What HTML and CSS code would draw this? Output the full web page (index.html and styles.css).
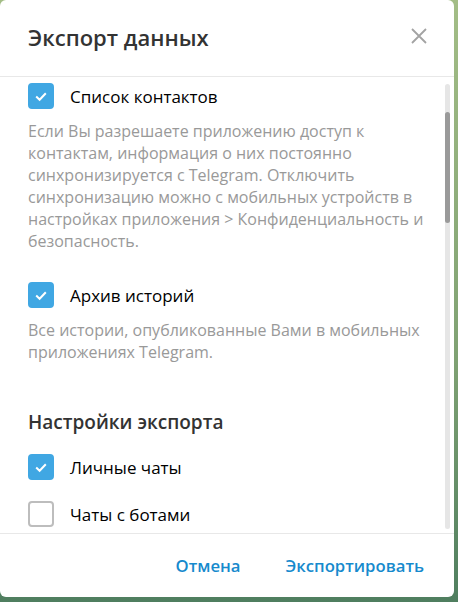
FILE: index.html
```html
<!DOCTYPE html>
<html lang="ru">
<head>
  <meta charset="UTF-8">
  <meta name="viewport" content="width=device-width, initial-scale=1.0">
  <title>Экспорт данных</title>
  <link rel="stylesheet" href="styles.css">
</head>
<body>
  <div class="box">
    <div class="box-header">
      <h1>Экспорт данных</h1>
      <button class="close" aria-label="Закрыть">
        <svg width="16" height="16" viewBox="0 0 16 16">
          <path d="M1 1L15 15M15 1L1 15" stroke="#a3a3a3" stroke-width="1.8" fill="none"/>
        </svg>
      </button>
    </div>

    <div class="box-body">
      <div class="scroll-content">
        <label class="check-row">
          <span class="checkbox checked">
            <svg width="26" height="26" viewBox="0 0 26 26">
              <path d="M8.2 13.6L11.6 16.8L17.8 10.2" stroke="#fff" stroke-width="2" fill="none"/>
            </svg>
          </span>
          Список контактов
        </label>
        <p class="about">Если Вы разрешаете приложению доступ к контактам, информация о них постоянно синхронизируется с Telegram. Отключить синхронизацию можно с мобильных устройств в настройках приложения &gt; Конфиденциальность и безопасность.</p>

        <label class="check-row">
          <span class="checkbox checked">
            <svg width="26" height="26" viewBox="0 0 26 26">
              <path d="M8.2 13.6L11.6 16.8L17.8 10.2" stroke="#fff" stroke-width="2" fill="none"/>
            </svg>
          </span>
          Архив историй
        </label>
        <p class="about">Все истории, опубликованные Вами в мобильных приложениях Telegram.</p>

        <h2>Настройки экспорта</h2>

        <label class="check-row">
          <span class="checkbox checked">
            <svg width="26" height="26" viewBox="0 0 26 26">
              <path d="M8.2 13.6L11.6 16.8L17.8 10.2" stroke="#fff" stroke-width="2" fill="none"/>
            </svg>
          </span>
          Личные чаты
        </label>
        <label class="check-row">
          <span class="checkbox"></span>
          Чаты с ботами
        </label>
      </div>
      <div class="scrollbar"><div class="scrollbar-thumb"></div></div>
    </div>

    <div class="box-footer">
      <button class="link-btn">Отмена</button>
      <button class="link-btn">Экспортировать</button>
    </div>
  </div>
</body>
</html>
```

FILE: styles.css
```css
body {
  margin: 0;
  height: 602px;
  overflow: hidden;
  font-family: "Open Sans", sans-serif;
  background: linear-gradient(180deg, #a3bd86 0%, #7fa173 60%, #4f7e5f 100%);
}

.box {
  width: 454px;
  height: 597px;
  background-color: #fff;
  border-radius: 6px;
  display: flex;
  flex-direction: column;
  overflow: hidden;
}

.box-header {
  height: 76px;
  flex-shrink: 0;
  display: flex;
  align-items: center;
  justify-content: space-between;
  padding: 0 28px;
  border-bottom: 1px solid #e8e8e8;
}

h1 {
  margin: 0;
  font-size: 22px;
  font-weight: 600;
  color: #333;
  padding-bottom: 2px;
}

.close {
  border: none;
  background: none;
  padding: 0;
  width: 16px;
  height: 16px;
  margin-right: -1px;
  margin-bottom: 5px;
  cursor: pointer;
}

.box-body {
  flex: 1;
  position: relative;
  overflow: hidden;
}

.scroll-content {
  padding: 6px 28px 0;
}

.check-row {
  display: flex;
  align-items: center;
  gap: 16px;
  height: 26px;
  font-size: 17px;
  color: #000;
  cursor: pointer;
  margin-bottom: 21px;
}

.checkbox {
  width: 26px;
  height: 26px;
  flex-shrink: 0;
  box-sizing: border-box;
  border: 2px solid #bdbdbd;
  border-radius: 4px;
  display: flex;
}

.checkbox svg {
  margin: -2px;
}

.checkbox.checked {
  background-color: #40a7e3;
  border-color: #40a7e3;
}

.about {
  margin: -10px 0 0;
  font-size: 16px;
  line-height: 22px;
  color: #999;
}

.about + .check-row {
  margin-top: 30px;
}

h2 {
  margin: 46px 0 19px;
  font-size: 19px;
  font-weight: 600;
  color: #333;
}

.scrollbar {
  position: absolute;
  top: 7px;
  right: 4px;
  bottom: 4px;
  width: 5px;
  border-radius: 3px;
  background-color: #e6e6e6;
}

.scrollbar-thumb {
  margin-top: 28px;
  height: 111px;
  border-radius: 3px;
  background-color: #9a9a9a;
}

.box-footer {
  height: 63px;
  flex-shrink: 0;
  display: flex;
  justify-content: flex-end;
  align-items: center;
  gap: 45px;
  padding: 0 30px 0 0;
  border-top: 1px solid #e8e8e8;
}

.link-btn {
  border: none;
  background: none;
  padding: 0;
  font-family: "Open Sans", sans-serif;
  font-size: 16.7px;
  font-weight: 600;
  color: #168acd;
  cursor: pointer;
}
```
